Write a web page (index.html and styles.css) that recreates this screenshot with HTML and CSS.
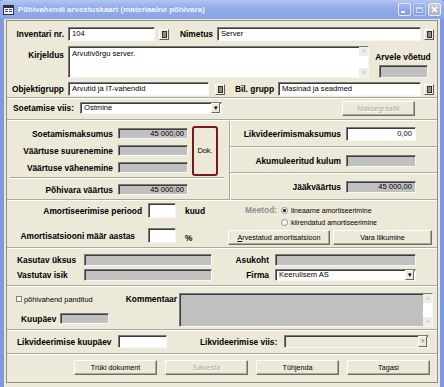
FILE: index.html
```html
<!DOCTYPE html>
<html lang="et">
<head>
    <meta charset="UTF-8">
    <title>Põhivahendi arvestuskaart</title>
    <link rel="stylesheet" href="styles.css">
</head>
<body>
<div class="window">
    <div class="titlebar">
        <svg class="app-icon" width="11" height="10" viewBox="0 0 11 10">
            <rect x="0.5" y="0.5" width="10" height="9" fill="#f4f4f4" stroke="#303040"/>
            <rect x="1" y="1" width="9" height="2" fill="#303040"/>
            <rect x="2" y="4" width="3" height="1" fill="#505060"/>
            <rect x="6" y="4" width="3" height="1" fill="#505060"/>
            <rect x="2" y="6" width="3" height="1" fill="#505060"/>
            <rect x="6" y="6" width="3" height="1" fill="#505060"/>
        </svg>
        <span class="title">Põhivahendi arvestuskaart (materiaalne põhivara)</span>
        <div class="caption-buttons">
            <span class="cap-btn cap-min"><i></i></span>
            <span class="cap-btn cap-max"><i></i></span>
            <span class="cap-btn cap-close">
                <svg width="13" height="13" viewBox="0 0 13 13"><path d="M3.5 3.5 L9.5 9.5 M9.5 3.5 L3.5 9.5" stroke="#fff" stroke-width="1.8"/></svg>
            </span>
        </div>
    </div>

    <div class="frame">
        <div class="form">

            <!-- Üldandmed -->
            <div class="section sec-head">
                <div class="row row-line">
                    <span class="lbl lbl-head">Inventari nr.</span>
                    <span class="field f-inv">104</span>
                    <span class="pick"><i></i></span>
                    <span class="lbl lbl-nimetus">Nimetus</span>
                    <span class="field f-nimetus">Server</span>
                    <span class="pick"><i></i></span>
                </div>
                <div class="row row-desc">
                    <span class="lbl lbl-head lbl-top">Kirjeldus</span>
                    <div class="field memo f-desc">
                        <span class="memo-text">Arvutivõrgu server.</span>
                        <div class="scroll">
                            <span class="sc-arrow">&#708;</span>
                            <span class="sc-track"></span>
                            <span class="sc-arrow">&#709;</span>
                        </div>
                    </div>
                    <div class="arvele">
                        <span class="lbl">Arvele võetud</span>
                        <span class="field gray f-arvele"></span>
                    </div>
                </div>
                <div class="row row-line row-group">
                    <span class="lbl lbl-head">Objektigrupp</span>
                    <span class="field f-objekt">Arvutid ja IT-vahendid</span>
                    <span class="pick pick-objekt"><i></i></span>
                    <span class="lbl lbl-bil">Bil. grupp</span>
                    <span class="field f-bil">Masinad ja seadmed</span>
                    <span class="pick"><i></i></span>
                </div>
            </div>

            <!-- Soetamise viis -->
            <div class="section sec-acq">
                <span class="lbl lbl-acq">Soetamise viis:</span>
                <div class="field combo f-acq">
                    <span class="combo-text">Ostmine</span>
                    <span class="combo-btn">&#9662;</span>
                </div>
                <span class="btn btn-disabled btn-maksegraafik">Maksegraafik</span>
            </div>

            <!-- Väärtused -->
            <div class="section sec-values">
                <div class="values-left">
                    <div class="value-grid">
                        <span class="lbl lbl-value">Soetamismaksumus</span>
                        <span class="field gray num">45 000,00</span>
                        <span class="btn-dok">Dok.</span>
                        <span class="lbl lbl-value">Väärtuse suurenemine</span>
                        <span class="field gray num"></span>
                        <span class="lbl lbl-value">Väärtuse vähenemine</span>
                        <span class="field gray num"></span>
                    </div>
                    <div class="value-sep"></div>
                    <div class="value-grid value-total">
                        <span class="lbl lbl-value">Põhivara väärtus</span>
                        <span class="field gray num">45 000,00</span>
                    </div>
                </div>
                <div class="values-right">
                    <div class="value-box">
                        <span class="lbl lbl-right">Likvideerimismaksumus</span>
                        <span class="field num f-likv">0,00</span>
                    </div>
                    <div class="value-box">
                        <span class="lbl lbl-right">Akumuleeritud kulum</span>
                        <span class="field gray num f-akum"></span>
                    </div>
                    <div class="value-box">
                        <span class="lbl lbl-right">Jääkväärtus</span>
                        <span class="field gray num f-jaak">45 000,00</span>
                    </div>
                </div>
            </div>

            <!-- Amortisatsioon -->
            <div class="section sec-amort">
                <div class="amort-left">
                    <div class="amort-row">
                        <span class="lbl lbl-amort">Amortiseerimise periood</span>
                        <span class="field f-amort"></span>
                        <span class="lbl unit">kuud</span>
                    </div>
                    <div class="amort-row amort-row2">
                        <span class="lbl lbl-amort lbl-amort2">Amortisatsiooni määr aastas</span>
                        <span class="field f-amort"></span>
                        <span class="lbl unit unit-pct">%</span>
                    </div>
                </div>
                <div class="amort-right">
                    <div class="method">
                        <span class="lbl lbl-method">Meetod:</span>
                        <div class="radios">
                            <span class="radio-line"><span class="radio checked"></span>lineaarne amortiseerimine</span>
                            <span class="radio-line"><span class="radio"></span>kiirendatud amortiseerimine</span>
                        </div>
                    </div>
                    <div class="amort-buttons">
                        <span class="btn btn-arv"><u>A</u>rvestatud amortisatsioon</span>
                        <span class="btn btn-vara">Vara liikumine</span>
                    </div>
                </div>
            </div>

            <!-- Asukoht -->
            <div class="section sec-place">
                <div class="place-left">
                    <div class="place-row">
                        <span class="lbl lbl-place">Kasutav üksus</span>
                        <span class="field gray f-place"></span>
                    </div>
                    <div class="place-row">
                        <span class="lbl lbl-place">Vastutav isik</span>
                        <span class="field gray f-place"></span>
                    </div>
                </div>
                <div class="place-right">
                    <div class="place-row">
                        <span class="lbl lbl-place-r">Asukoht</span>
                        <span class="field gray f-firma"></span>
                    </div>
                    <div class="place-row">
                        <span class="lbl lbl-place-r">Firma</span>
                        <div class="field combo f-firma">
                            <span class="combo-text">Keerulisem AS</span>
                            <span class="combo-btn">&#9662;</span>
                        </div>
                    </div>
                </div>
            </div>

            <!-- Pant ja kommentaar -->
            <div class="section sec-comment">
                <div class="comment-left">
                    <div class="pledge-row">
                        <span class="check"></span>
                        <span class="small">põhivahend panditud</span>
                        <span class="lbl lbl-comment">Kommentaar</span>
                    </div>
                    <div class="date-row">
                        <span class="lbl">Kuupäev</span>
                        <span class="field gray f-date"></span>
                    </div>
                </div>
                <div class="field gray memo f-comment">
                    <span class="memo-text"></span>
                    <div class="scroll">
                        <span class="sc-arrow">&#708;</span>
                        <span class="sc-track"></span>
                        <span class="sc-arrow">&#709;</span>
                    </div>
                </div>
            </div>

            <!-- Likvideerimine -->
            <div class="section sec-liq">
                <span class="lbl lbl-liq">Likvideerimise kuupäev</span>
                <span class="field f-liqdate"></span>
                <span class="lbl lbl-liqway">Likvideerimise viis:</span>
                <div class="field combo combo-disabled f-liqway">
                    <span class="combo-text"></span>
                    <span class="combo-btn">&#9662;</span>
                </div>
            </div>

            <div class="actions">
                <span class="btn btn-action">Trüki dokument</span>
                <span class="btn btn-action btn-disabled">Salvesta</span>
                <span class="btn btn-action">Tühjenda</span>
                <span class="btn btn-action">Tagasi</span>
            </div>

        </div>
    </div>
</div>
</body>
</html>
```

FILE: styles.css
```css
* {
    box-sizing: border-box;
}

body {
    margin: 0;
    font-family: "Liberation Sans", Arial, sans-serif;
    background-color: #ffffff;
}

.window {
    width: 444px;
    height: 387px;
    display: flex;
    flex-direction: column;
    background-color: #7d99df;
}

/* title bar */

.titlebar {
    height: 19px;
    display: flex;
    align-items: center;
    padding: 0 3px 0 3px;
    background: linear-gradient(#b3c5f2, #94ace9 40%, #8aa3e6);
    border-radius: 4px 4px 0 0;
}

.app-icon {
    margin-right: 4px;
    flex: none;
}

.title {
    color: #f2f5fd;
    font-weight: bold;
    font-size: 7.9px;
    flex: 1;
    white-space: nowrap;
}

.caption-buttons {
    display: flex;
    gap: 2px;
}

.cap-btn {
    width: 13px;
    height: 13px;
    border: 1px solid #e6ecfb;
    border-radius: 2px;
    background: linear-gradient(#a3b6ee, #7f9be3);
    display: flex;
    align-items: flex-end;
    justify-content: center;
}

.cap-min i {
    width: 4px;
    height: 2px;
    background: #ffffff;
    margin: 0 4px 2px 0;
}

.cap-max {
    opacity: 0.55;
}

.cap-max i {
    width: 7px;
    height: 6px;
    border: 1px solid #ffffff;
    border-top-width: 2px;
    margin-bottom: 2px;
}

.cap-close {
    background: linear-gradient(#c9cede, #a9b0c8);
    border-color: #f0f2fa;
    align-items: center;
}

.cap-close svg {
    display: block;
}

/* window body */

.frame {
    flex: 1;
    padding: 1px 2px 4px 2px;
    margin: 0 4px;
    background-color: #ece9d8;
    display: flex;
}

.form {
    flex: 1;
    border: 1px solid #8f8d80;
    display: flex;
    flex-direction: column;
}

.section {
    border-bottom: 1px solid #ffffff;
    box-shadow: inset 0 -2px 0 -1px #aca899;
    flex: none;
}

.lbl {
    font-weight: bold;
    font-size: 8.4px;
    color: #000000;
    white-space: nowrap;
}

.small {
    font-size: 7.4px;
    color: #000000;
    white-space: nowrap;
}

.field {
    height: 14px;
    background-color: #ffffff;
    border: 1px solid;
    border-color: #7a7a7a #f6f6f6 #f6f6f6 #7a7a7a;
    box-shadow: inset 1px 1px 0 #3c3c3c;
    font-size: 7.6px;
    line-height: 12px;
    padding: 0 3px;
    white-space: nowrap;
    overflow: hidden;
    flex: none;
}

.field.gray {
    background-color: #c0c0c0;
}

.num {
    text-align: right;
}

.pick {
    width: 10px;
    height: 11px;
    background-color: #ece9d8;
    border: 1px solid;
    border-color: #ffffff #5e5c55 #5e5c55 #ffffff;
    display: flex;
    align-items: center;
    justify-content: center;
    flex: none;
}

.pick i {
    width: 5px;
    height: 7px;
    border: 1px solid #303030;
    background-color: #8c8c8c;
}

/* general section */

.sec-head {
    height: 78px;
    padding-top: 6px;
}

.row {
    display: flex;
}

.row-line {
    height: 14px;
    align-items: center;
}

.lbl-head {
    width: 57px;
    text-align: right;
    margin-right: 4px;
}

.lbl-top {
    padding-top: 4px;
}

.f-inv {
    width: 87px;
    margin-right: 4px;
}

.lbl-nimetus {
    width: 37px;
    margin-left: 7px;
    margin-right: 4px;
    text-align: right;
}

.f-nimetus {
    width: 204px;
    margin-right: 3px;
}

.row-desc {
    margin-top: 5px;
    height: 32px;
}

.memo {
    height: 100%;
    display: flex;
    padding: 0 0 0 3px;
}

.memo-text {
    flex: 1;
    padding-top: 2px;
    line-height: 9px;
}

.scroll {
    width: 9px;
    display: flex;
    flex-direction: column;
    background-color: #f4f4f0;
}

.sc-arrow {
    height: 9px;
    font-size: 7px;
    line-height: 10px;
    text-align: center;
    color: #b7b7b7;
    background-color: #eeeee8;
}

.sc-track {
    flex: 1;
    background-color: #ffffff;
}

.f-desc {
    width: 301px;
}

.arvele {
    width: 68px;
    display: flex;
    flex-direction: column;
    align-items: center;
    padding-top: 6px;
}

.f-arvele {
    width: 49px;
    height: 13px;
    margin-top: 3px;
}

.row-group {
    margin-top: 4px;
}

.f-objekt {
    width: 141px;
}

.pick-objekt {
    margin-left: 6px;
}

.lbl-bil {
    width: 45px;
    margin-left: 4px;
    margin-right: 4px;
    text-align: right;
}

.f-bil {
    width: 143px;
    margin-right: 3px;
}

/* acquisition */

.sec-acq {
    height: 22px;
    display: flex;
    align-items: center;
    padding-bottom: 3px;
}

.lbl-acq {
    width: 67px;
    margin-left: 6px;
}

.combo {
    display: flex;
    padding: 0 1px 0 3px;
    height: 12px;
    align-items: stretch;
}

.combo-text {
    flex: 1;
    line-height: 10px;
}

.combo-btn {
    width: 9px;
    background-color: #ece9d8;
    border: 1px solid;
    border-color: #ffffff #6b6960 #6b6960 #ffffff;
    font-size: 7px;
    line-height: 8px;
    text-align: center;
    color: #000000;
}

.f-acq {
    width: 142px;
}

.btn {
    height: 15px;
    background-color: #ece9d8;
    border: 1px solid;
    border-color: #ffffff #716f64 #716f64 #ffffff;
    box-shadow: inset -1px -1px 0 #aca899;
    font-size: 7.2px;
    line-height: 13px;
    text-align: center;
    white-space: nowrap;
    color: #000000;
}

.btn-disabled {
    color: #aca899;
    text-shadow: 1px 1px 0 #ffffff;
}

.btn-maksegraafik {
    width: 73px;
    margin-left: 120px;
}

/* values */

.sec-values {
    height: 80px;
    display: flex;
}

.values-left {
    width: 222px;
    padding-top: 4px;
}

.value-grid {
    display: grid;
    grid-template-columns: 106px 70px 25px;
    grid-auto-rows: 17px;
    column-gap: 5px;
    align-items: center;
}

.value-grid .field {
    height: 11px;
    line-height: 9px;
}

.lbl-value {
    text-align: right;
}

.btn-dok {
    grid-column: 3;
    grid-row: 1 / span 3;
    height: 50px;
    margin-left: -1px;
    border: 2px solid #7b1a1a;
    border-radius: 3px;
    font-size: 7.4px;
    display: flex;
    align-items: center;
    justify-content: center;
}

.value-sep {
    margin: 1px 5px 2px 3px;
    border-top: 1px solid #aca899;
    border-bottom: 1px solid #ffffff;
}

.values-right {
    flex: 1;
    border-left: 1px solid #aca899;
    box-shadow: inset 1px 0 0 #ffffff;
    display: flex;
    flex-direction: column;
}

.value-box {
    flex: 1;
    display: flex;
    align-items: center;
    border-bottom: 1px solid #ffffff;
    box-shadow: inset 0 -2px 0 -1px #aca899;
}

.value-box:last-child {
    border-bottom: none;
    box-shadow: none;
}

.lbl-right {
    width: 111px;
    text-align: right;
    margin-right: 5px;
}

.f-likv {
    width: 70px;
    height: 14px;
}

.f-akum,
.f-jaak {
    width: 70px;
    height: 12px;
    line-height: 10px;
}

/* amortisation */

.sec-amort {
    height: 48px;
    display: flex;
}

.amort-left {
    width: 221px;
    padding-top: 2px;
}

.amort-row {
    display: flex;
    align-items: center;
    height: 15px;
}

.amort-row2 {
    margin-top: 10px;
}

.lbl-amort {
    width: 135px;
    text-align: right;
    margin-right: 6px;
}

.lbl-amort2 {
    padding-right: 7px;
}

.f-amort {
    width: 28px;
    height: 15px;
}

.unit {
    margin-left: 9px;
}

.unit-pct {
    padding-top: 4px;
}

.amort-right {
    flex: 1;
    padding-top: 3px;
}

.method {
    display: flex;
}

.lbl-method {
    color: #8e8e8e;
    margin-left: 17px;
    width: 36px;
    line-height: 12px;
}

.radios {
    display: flex;
    flex-direction: column;
}

.radio-line {
    height: 12px;
    display: flex;
    align-items: center;
    font-size: 7px;
}

.radio {
    width: 7px;
    height: 7px;
    border-radius: 50%;
    border: 1px solid #8a8a8a;
    background-color: #ffffff;
    margin-right: 3px;
    display: flex;
    align-items: center;
    justify-content: center;
}

.radio.checked::after {
    content: "";
    width: 3px;
    height: 3px;
    border-radius: 50%;
    background-color: #000000;
}

.amort-buttons {
    display: flex;
    gap: 3px;
    margin-top: 2px;
}

.btn-arv {
    width: 102px;
}

.btn-vara {
    width: 99px;
}

/* place */

.sec-place {
    height: 38px;
    display: flex;
    padding-top: 5px;
}

.place-left {
    width: 221px;
}

.place-row {
    display: flex;
    align-items: center;
    height: 12px;
    margin-bottom: 3px;
}

.lbl-place {
    width: 67px;
    margin-left: 10px;
}

.f-place {
    width: 128px;
    height: 12px;
}

.lbl-place-r {
    width: 41px;
    text-align: right;
    margin-right: 6px;
}

.f-firma {
    width: 141px;
    height: 12px;
}

/* comment */

.sec-comment {
    height: 44px;
    display: flex;
    padding-top: 6px;
}

.comment-left {
    width: 172px;
}

.pledge-row {
    display: flex;
    align-items: center;
    height: 12px;
}

.check {
    width: 6px;
    height: 6px;
    margin-left: 9px;
    margin-right: 2px;
    background-color: #ffffff;
    border: 1px solid #7f7f7f;
}

.lbl-comment {
    margin-left: auto;
    margin-right: 2px;
}

.date-row {
    display: flex;
    align-items: center;
    margin-top: 8px;
    padding-left: 14px;
    gap: 4px;
}

.f-date {
    width: 49px;
    height: 11px;
}

.f-comment {
    width: 254px;
    height: 34px;
}

/* liquidation */

.sec-liq {
    height: 24px;
    display: flex;
    align-items: center;
    padding-bottom: 2px;
}

.lbl-liq {
    width: 96px;
    margin-left: 10px;
    margin-right: 5px;
}

.f-liqdate {
    width: 49px;
    height: 13px;
}

.lbl-liqway {
    width: 80px;
    margin-left: 33px;
    margin-right: 4px;
}

.f-liqway {
    width: 145px;
    height: 13px;
}

.combo-disabled {
    background-color: #ece9d8;
}

.combo-disabled .combo-btn {
    color: #aca899;
}

/* actions */

.actions {
    flex: 1;
    display: flex;
    gap: 8px;
    padding: 5px 0 0 67px;
}

.btn-action {
    width: 83px;
}
```
